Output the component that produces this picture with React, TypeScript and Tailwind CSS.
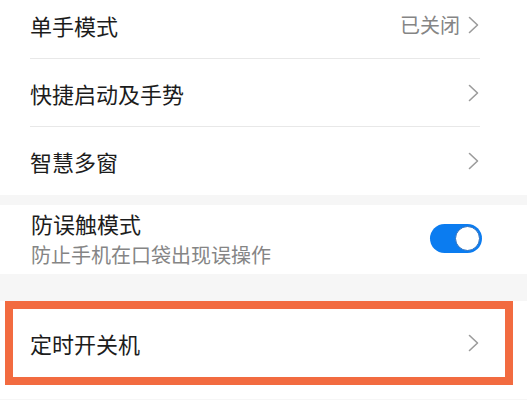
import React from 'react';

const Chevron = () => (
  <svg width="11" height="18" viewBox="0 0 11 18" fill="none" className="shrink-0">
    <polyline points="1.5,1.5 9.5,9 1.5,16.5" stroke="#9b9b9b" strokeWidth="1.6" strokeLinecap="round" strokeLinejoin="round" />
  </svg>
);

const NavRow = ({ label, value, divider }: { label: string; value?: string; divider?: boolean }) => (
  <div className="relative flex h-[68px] items-center justify-between pl-[30px] pr-[48px]">
    <span className="text-[22px] text-[#1c1c1c]">{label}</span>
    <div className="flex items-center gap-[8px]">
      {value && <span className="text-[20px] text-[#858585]">{value}</span>}
      <Chevron />
    </div>
    {divider && <div className="absolute bottom-0 left-[30px] right-[47px] h-px bg-[#e8e8e8]" />}
  </div>
);

export default function App() {
  return (
    <div
      className="h-[400px] w-[527px] overflow-hidden bg-[#f6f6f6]"
      style={{ fontFamily: '"Noto Sans CJK SC", "Noto Sans", sans-serif' }}
    >
      {/* first group */}
      <div className="-mt-[9px] bg-white">
        <NavRow label="单手模式" value="已关闭" divider />
        <NavRow label="快捷启动及手势" divider />
        <NavRow label="智慧多窗" />
      </div>

      {/* toggle group */}
      <div className="mt-[10px] flex h-[69px] items-center justify-between bg-white pl-[31px] pr-[45px]">
        <div className="flex flex-col leading-none">
          <span className="text-[22px] leading-[30px] text-[#1c1c1c]">防误触模式</span>
          <span className="text-[20px] leading-[34px] text-[#858585]">防止手机在口袋出现误操作</span>
        </div>
        <div className="relative -mt-[3px] h-[29px] w-[52px] rounded-full bg-[#0b7cf0]">
          <div className="absolute right-[2px] top-[2px] h-[25px] w-[25px] rounded-full border border-[#2a6fc0] bg-white" />
        </div>
      </div>

      {/* highlighted row */}
      <div className="mt-[27px] h-[98px] bg-white">
        <div className="ml-[5px] flex h-[84px] w-[508px] items-center justify-between border-[8px] border-[#f26b40] pl-[17px] pr-[26px]">
          <span className="text-[22px] text-[#1c1c1c]">定时开关机</span>
          <Chevron />
        </div>
      </div>
    </div>
  );
}
